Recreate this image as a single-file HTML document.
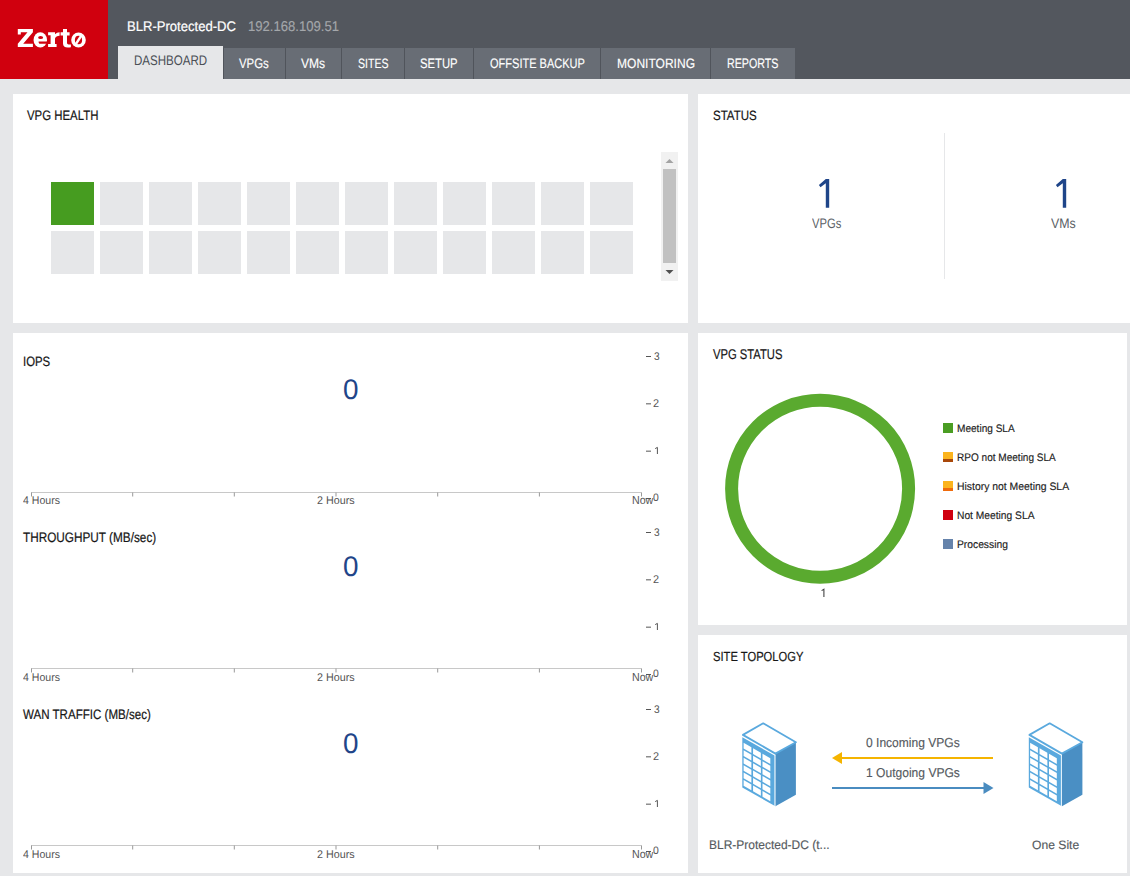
<!DOCTYPE html>
<html><head><meta charset="utf-8"><title>Zerto Dashboard</title>
<style>
html,body{margin:0;padding:0;}
body{width:1130px;height:876px;overflow:hidden;position:relative;background:#e6e7e9;font-family:"Liberation Sans",sans-serif;text-rendering:geometricPrecision;}
.t{position:absolute;white-space:nowrap;line-height:1;transform-origin:0 0;}
.s3{-webkit-text-stroke:0.2px currentColor;}
.s2{-webkit-text-stroke:0.15px currentColor;}
.hdr{position:absolute;left:0;top:0;width:1130px;height:79px;background:#53575e;}
.logo{position:absolute;left:0;top:0;width:108px;height:79px;background:#d0000e;}
.tab{position:absolute;top:48px;height:31px;background:#686d75;}
.tab.act{top:46px;height:33px;background:#e6e7e9;}
.sep{position:absolute;top:48px;height:31px;width:1px;background:#50545b;}
.pnl{position:absolute;background:#fff;}
.sq{position:absolute;width:43px;height:43px;}
.ov{position:absolute;left:0;top:0;}
</style></head><body>
<header>
<div class="hdr"></div>
<div class="logo"></div>
<span class="t s3" style="left:126.87px;top:20.20px;font-size:13.86px;font-family:'Liberation Sans', sans-serif;font-weight:400;color:#fff;transform:scaleX(0.9423);">BLR-Protected-DC</span>
<span class="t s2" style="left:248.42px;top:20.20px;font-size:14.22px;font-family:'Liberation Sans', sans-serif;font-weight:400;color:#a4a7ab;transform:scaleX(0.9213);">192.168.109.51</span>
<nav>
<div class="tab act" style="left:118px;width:105px"></div>
<span class="t " style="left:133.65px;top:54.36px;font-size:13.82px;font-family:'Liberation Sans', sans-serif;font-weight:400;color:#4b4f56;transform:scaleX(0.8359);">DASHBOARD</span>
<div class="tab" style="left:224px;width:61px"></div>
<div class="sep" style="left:223px"></div>
<span class="t s2" style="left:238.68px;top:56.82px;font-size:13.75px;font-family:'Liberation Sans', sans-serif;font-weight:400;color:#fff;transform:scaleX(0.8283);">VPGs</span>
<div class="tab" style="left:286px;width:55px"></div>
<div class="sep" style="left:285px"></div>
<span class="t s2" style="left:300.89px;top:56.82px;font-size:13.75px;font-family:'Liberation Sans', sans-serif;font-weight:400;color:#fff;transform:scaleX(0.8774);">VMs</span>
<div class="tab" style="left:342px;width:62px"></div>
<div class="sep" style="left:341px"></div>
<span class="t s2" style="left:357.65px;top:56.86px;font-size:13.51px;font-family:'Liberation Sans', sans-serif;font-weight:400;color:#fff;transform:scaleX(0.7813);">SITES</span>
<div class="tab" style="left:405px;width:68px"></div>
<div class="sep" style="left:404px"></div>
<span class="t s2" style="left:420.06px;top:56.89px;font-size:13.70px;font-family:'Liberation Sans', sans-serif;font-weight:400;color:#fff;transform:scaleX(0.8220);">SETUP</span>
<div class="tab" style="left:474px;width:126px"></div>
<div class="sep" style="left:473px"></div>
<span class="t s2" style="left:490.20px;top:56.82px;font-size:13.75px;font-family:'Liberation Sans', sans-serif;font-weight:400;color:#fff;transform:scaleX(0.8012);">OFFSITE BACKUP</span>
<div class="tab" style="left:601px;width:109px"></div>
<div class="sep" style="left:600px"></div>
<span class="t s2" style="left:616.62px;top:56.86px;font-size:13.51px;font-family:'Liberation Sans', sans-serif;font-weight:400;color:#fff;transform:scaleX(0.8913);">MONITORING</span>
<div class="tab" style="left:711px;width:84px"></div>
<div class="sep" style="left:710px"></div>
<span class="t s2" style="left:726.89px;top:56.89px;font-size:13.70px;font-family:'Liberation Sans', sans-serif;font-weight:400;color:#fff;transform:scaleX(0.7812);">REPORTS</span>
</nav></header>
<main>
<div class="pnl" style="left:13px;top:94px;width:675px;height:229px"></div>
<div class="pnl" style="left:698px;top:94px;width:440px;height:229px"></div>
<div class="pnl" style="left:13px;top:333px;width:675px;height:540px"></div>
<div class="pnl" style="left:698px;top:333px;width:429px;height:292px"></div>
<div class="pnl" style="left:698px;top:635px;width:429px;height:238px"></div>
<span class="t s3" style="left:27.21px;top:108.89px;font-size:13.70px;font-family:'Liberation Sans', sans-serif;font-weight:400;color:#161616;transform:scaleX(0.8330);">VPG HEALTH</span>
<span class="t s3" style="left:712.82px;top:109.07px;font-size:13.49px;font-family:'Liberation Sans', sans-serif;font-weight:400;color:#161616;transform:scaleX(0.8531);">STATUS</span>
<span class="t s3" style="left:713.38px;top:347.39px;font-size:14.09px;font-family:'Liberation Sans', sans-serif;font-weight:400;color:#161616;transform:scaleX(0.7970);">VPG STATUS</span>
<span class="t s3" style="left:712.70px;top:650.10px;font-size:13.26px;font-family:'Liberation Sans', sans-serif;font-weight:400;color:#161616;transform:scaleX(0.8449);">SITE TOPOLOGY</span>
<div class="sq" style="left:51px;top:182px;background:#469c20"></div>
<div class="sq" style="left:100px;top:182px;background:#e6e7e9"></div>
<div class="sq" style="left:149px;top:182px;background:#e6e7e9"></div>
<div class="sq" style="left:198px;top:182px;background:#e6e7e9"></div>
<div class="sq" style="left:247px;top:182px;background:#e6e7e9"></div>
<div class="sq" style="left:296px;top:182px;background:#e6e7e9"></div>
<div class="sq" style="left:345px;top:182px;background:#e6e7e9"></div>
<div class="sq" style="left:394px;top:182px;background:#e6e7e9"></div>
<div class="sq" style="left:443px;top:182px;background:#e6e7e9"></div>
<div class="sq" style="left:492px;top:182px;background:#e6e7e9"></div>
<div class="sq" style="left:541px;top:182px;background:#e6e7e9"></div>
<div class="sq" style="left:590px;top:182px;background:#e6e7e9"></div>
<div class="sq" style="left:51px;top:231px;background:#e6e7e9"></div>
<div class="sq" style="left:100px;top:231px;background:#e6e7e9"></div>
<div class="sq" style="left:149px;top:231px;background:#e6e7e9"></div>
<div class="sq" style="left:198px;top:231px;background:#e6e7e9"></div>
<div class="sq" style="left:247px;top:231px;background:#e6e7e9"></div>
<div class="sq" style="left:296px;top:231px;background:#e6e7e9"></div>
<div class="sq" style="left:345px;top:231px;background:#e6e7e9"></div>
<div class="sq" style="left:394px;top:231px;background:#e6e7e9"></div>
<div class="sq" style="left:443px;top:231px;background:#e6e7e9"></div>
<div class="sq" style="left:492px;top:231px;background:#e6e7e9"></div>
<div class="sq" style="left:541px;top:231px;background:#e6e7e9"></div>
<div class="sq" style="left:590px;top:231px;background:#e6e7e9"></div>
<div style="position:absolute;left:661px;top:152px;width:17px;height:129px;background:#f1f1f1"></div>
<div style="position:absolute;left:663px;top:169px;width:13px;height:94px;background:#c1c1c1"></div>
<div style="position:absolute;left:944px;top:133px;width:1px;height:146px;background:#e6e7e9"></div>
<span class="t " style="left:811.72px;top:217.11px;font-size:13.71px;font-family:'Liberation Sans', sans-serif;font-weight:400;color:#5b5f66;transform:scaleX(0.8174);">VPGs</span>
<span class="t " style="left:1050.55px;top:217.01px;font-size:13.80px;font-family:'Liberation Sans', sans-serif;font-weight:400;color:#5b5f66;transform:scaleX(0.8965);">VMs</span>
<span class="t s3" style="left:22.95px;top:354.92px;font-size:13.51px;font-family:'Liberation Sans', sans-serif;font-weight:400;color:#161616;transform:scaleX(0.8429);">IOPS</span>
<span class="t " style="left:342.90px;top:375.82px;font-size:28.47px;font-family:'Liberation Sans', sans-serif;font-weight:400;color:#1f4589;transform:scaleX(0.9784);">0</span>
<span class="t " style="left:22.76px;top:496.01px;font-size:11.14px;font-family:'Liberation Sans', sans-serif;font-weight:400;color:#555;transform:scaleX(0.9486);">4 Hours</span>
<span class="t " style="left:317.40px;top:496.01px;font-size:11.14px;font-family:'Liberation Sans', sans-serif;font-weight:400;color:#555;transform:scaleX(0.9653);">2 Hours</span>
<span class="t " style="left:631.93px;top:496.49px;font-size:11.51px;font-family:'Liberation Sans', sans-serif;font-weight:400;color:#555;transform:scaleX(0.9257);">Now</span>
<span class="t " style="left:653.85px;top:351.93px;font-size:11.10px;font-family:'Liberation Sans', sans-serif;font-weight:400;color:#555;transform:scaleX(0.9130);">3</span>
<span class="t " style="left:653.30px;top:399.32px;font-size:11.20px;font-family:'Liberation Sans', sans-serif;font-weight:400;color:#555;transform:scaleX(0.9723);">2</span>
<span class="t " style="left:653.21px;top:492.88px;font-size:10.89px;font-family:'Liberation Sans', sans-serif;font-weight:400;color:#555;transform:scaleX(0.9583);">0</span>
<span class="t s3" style="left:22.50px;top:530.89px;font-size:13.70px;font-family:'Liberation Sans', sans-serif;font-weight:400;color:#161616;transform:scaleX(0.8601);">THROUGHPUT (MB/sec)</span>
<span class="t " style="left:342.90px;top:552.82px;font-size:28.47px;font-family:'Liberation Sans', sans-serif;font-weight:400;color:#1f4589;transform:scaleX(0.9784);">0</span>
<span class="t " style="left:22.76px;top:673.01px;font-size:11.14px;font-family:'Liberation Sans', sans-serif;font-weight:400;color:#555;transform:scaleX(0.9486);">4 Hours</span>
<span class="t " style="left:317.40px;top:673.01px;font-size:11.14px;font-family:'Liberation Sans', sans-serif;font-weight:400;color:#555;transform:scaleX(0.9653);">2 Hours</span>
<span class="t " style="left:631.93px;top:673.49px;font-size:11.51px;font-family:'Liberation Sans', sans-serif;font-weight:400;color:#555;transform:scaleX(0.9257);">Now</span>
<span class="t " style="left:653.85px;top:527.93px;font-size:11.10px;font-family:'Liberation Sans', sans-serif;font-weight:400;color:#555;transform:scaleX(0.9130);">3</span>
<span class="t " style="left:653.30px;top:575.32px;font-size:11.20px;font-family:'Liberation Sans', sans-serif;font-weight:400;color:#555;transform:scaleX(0.9723);">2</span>
<span class="t " style="left:653.21px;top:668.88px;font-size:10.89px;font-family:'Liberation Sans', sans-serif;font-weight:400;color:#555;transform:scaleX(0.9583);">0</span>
<span class="t s3" style="left:22.98px;top:707.89px;font-size:13.70px;font-family:'Liberation Sans', sans-serif;font-weight:400;color:#161616;transform:scaleX(0.8447);">WAN TRAFFIC (MB/sec)</span>
<span class="t " style="left:342.90px;top:729.82px;font-size:28.47px;font-family:'Liberation Sans', sans-serif;font-weight:400;color:#1f4589;transform:scaleX(0.9784);">0</span>
<span class="t " style="left:22.76px;top:850.01px;font-size:11.14px;font-family:'Liberation Sans', sans-serif;font-weight:400;color:#555;transform:scaleX(0.9486);">4 Hours</span>
<span class="t " style="left:317.40px;top:850.01px;font-size:11.14px;font-family:'Liberation Sans', sans-serif;font-weight:400;color:#555;transform:scaleX(0.9653);">2 Hours</span>
<span class="t " style="left:631.93px;top:850.49px;font-size:11.51px;font-family:'Liberation Sans', sans-serif;font-weight:400;color:#555;transform:scaleX(0.9257);">Now</span>
<span class="t " style="left:653.85px;top:704.93px;font-size:11.10px;font-family:'Liberation Sans', sans-serif;font-weight:400;color:#555;transform:scaleX(0.9130);">3</span>
<span class="t " style="left:653.30px;top:752.32px;font-size:11.20px;font-family:'Liberation Sans', sans-serif;font-weight:400;color:#555;transform:scaleX(0.9723);">2</span>
<span class="t " style="left:653.21px;top:845.88px;font-size:10.89px;font-family:'Liberation Sans', sans-serif;font-weight:400;color:#555;transform:scaleX(0.9583);">0</span>
<div style="position:absolute;left:943px;top:423px;width:10px;height:10px;background:#4a9d23"></div>
<span class="t s2" style="left:957.11px;top:423.61px;font-size:10.95px;font-family:'Liberation Sans', sans-serif;font-weight:400;color:#222;transform:scaleX(0.9210);">Meeting SLA</span>
<div style="position:absolute;left:943px;top:452px;width:10px;height:7px;background:#fbb41e"></div>
<div style="position:absolute;left:943px;top:459px;width:10px;height:3px;background:#a9480a"></div>
<span class="t s2" style="left:957.01px;top:452.61px;font-size:10.95px;font-family:'Liberation Sans', sans-serif;font-weight:400;color:#222;transform:scaleX(0.9182);">RPO not Meeting SLA</span>
<div style="position:absolute;left:943px;top:481px;width:10px;height:7px;background:#fbb41e"></div>
<div style="position:absolute;left:943px;top:488px;width:10px;height:3px;background:#ef6b0c"></div>
<span class="t s2" style="left:956.99px;top:481.61px;font-size:10.95px;font-family:'Liberation Sans', sans-serif;font-weight:400;color:#222;transform:scaleX(0.9504);">History not Meeting SLA</span>
<div style="position:absolute;left:943px;top:510px;width:10px;height:10px;background:#d0000f"></div>
<span class="t s2" style="left:957.02px;top:510.61px;font-size:10.95px;font-family:'Liberation Sans', sans-serif;font-weight:400;color:#222;transform:scaleX(0.9373);">Not Meeting SLA</span>
<div style="position:absolute;left:943px;top:539px;width:10px;height:10px;background:#6583ab"></div>
<span class="t s2" style="left:957.10px;top:539.61px;font-size:10.95px;font-family:'Liberation Sans', sans-serif;font-weight:400;color:#222;transform:scaleX(0.9404);">Processing</span>
<span class="t s2" style="left:865.95px;top:736.20px;font-size:13.09px;font-family:'Liberation Sans', sans-serif;font-weight:400;color:#555a60;transform:scaleX(0.9210);">0 Incoming VPGs</span>
<span class="t s2" style="left:865.51px;top:767.44px;font-size:12.90px;font-family:'Liberation Sans', sans-serif;font-weight:400;color:#555a60;transform:scaleX(0.9359);">1 Outgoing VPGs</span>
<span class="t s2" style="left:709.28px;top:838.71px;font-size:12.55px;font-family:'Liberation Sans', sans-serif;font-weight:400;color:#555a60;transform:scaleX(0.9552);">BLR-Protected-DC (t...</span>
<span class="t s2" style="left:1032.01px;top:839.10px;font-size:12.25px;font-family:'Liberation Sans', sans-serif;font-weight:400;color:#555a60;transform:scaleX(0.9905);">One Site</span>
</main>
<svg class="ov" width="1130" height="876" viewBox="0 0 1130 876"><path d="M17.8,29 H32.9 V32.3 L23.2,43.8 H32.9 V47 H17.8 V43.7 L27.5,32.3 H20.8 V34.6 H17.8 Z" fill="#fff"/><ellipse cx="40.3" cy="39.9" rx="6.75" ry="7.6" fill="#fff"/><ellipse cx="40.6" cy="37.5" rx="2.5" ry="1.55" fill="#d0000e"/><path d="M38.6,41.6 H47.3 V43.7 H39.4 Q38.4,42.8 38.6,41.6 Z" fill="#d0000e"/><path d="M48.1,32.3 H55 V34.3 Q56.8,32.3 59.6,32.3 V35.8 Q56,35.8 55,38.5 V44 H56.6 V47 H48.1 V44 H50.6 V35.2 H48.1 Z" fill="#fff"/><path d="M63,29 H67 V32.3 H69.6 V35.4 H67 V43 Q67,44.4 68.6,44.4 H70.9 V47.3 Q69.5,47.6 67.8,47.6 Q63,47.6 63,43.5 V35.4 H60.6 V32.3 H63 Z" fill="#fff"/><ellipse cx="78.5" cy="40" rx="7.3" ry="7.55" fill="#fff"/><ellipse cx="78.5" cy="40" rx="3.6" ry="4.3" fill="#d0000e"/><path d="M80.6,34.6 L82.9,35.6 L76.4,45.4 L74.1,44.4 Z" fill="#fff"/><polygon points="665.5,163 673.5,163 669.5,159" fill="#a3a3a3"/><polygon points="665.5,270 673.5,270 669.5,274" fill="#505050"/><polygon points="818.90,184.90 825.80,179.10 829.20,179.10 829.20,207.80 825.80,207.80 825.80,183.20 820.50,187.20" fill="#1f4589"/><polygon points="1055.90,184.90 1062.80,179.10 1066.20,179.10 1066.20,207.80 1062.80,207.80 1062.80,183.20 1057.50,187.20" fill="#1f4589"/><line x1="31" y1="492.5" x2="641.5" y2="492.5" stroke="#c8c8c8" stroke-width="1"/><line x1="31.5" y1="492.5" x2="31.5" y2="496.5" stroke="#999" stroke-width="1"/><line x1="132.7" y1="492.5" x2="132.7" y2="496.5" stroke="#999" stroke-width="1"/><line x1="234.3" y1="492.5" x2="234.3" y2="496.5" stroke="#999" stroke-width="1"/><line x1="336.0" y1="492.5" x2="336.0" y2="496.5" stroke="#999" stroke-width="1"/><line x1="437.7" y1="492.5" x2="437.7" y2="496.5" stroke="#999" stroke-width="1"/><line x1="539.4" y1="492.5" x2="539.4" y2="496.5" stroke="#999" stroke-width="1"/><line x1="641.5" y1="492.5" x2="641.5" y2="496.5" stroke="#999" stroke-width="1"/><line x1="646" y1="356.50" x2="651" y2="356.50" stroke="#555" stroke-width="1"/><line x1="646" y1="403.83" x2="651" y2="403.83" stroke="#555" stroke-width="1"/><line x1="646" y1="451.16" x2="651" y2="451.16" stroke="#555" stroke-width="1"/><line x1="646" y1="498.49" x2="651" y2="498.49" stroke="#555" stroke-width="1"/><path d="M655.2,448.60 L657.4,447.40 V454.00" fill="none" stroke="#555" stroke-width="1"/><line x1="31" y1="668.5" x2="641.5" y2="668.5" stroke="#c8c8c8" stroke-width="1"/><line x1="31.5" y1="668.5" x2="31.5" y2="672.5" stroke="#999" stroke-width="1"/><line x1="132.7" y1="668.5" x2="132.7" y2="672.5" stroke="#999" stroke-width="1"/><line x1="234.3" y1="668.5" x2="234.3" y2="672.5" stroke="#999" stroke-width="1"/><line x1="336.0" y1="668.5" x2="336.0" y2="672.5" stroke="#999" stroke-width="1"/><line x1="437.7" y1="668.5" x2="437.7" y2="672.5" stroke="#999" stroke-width="1"/><line x1="539.4" y1="668.5" x2="539.4" y2="672.5" stroke="#999" stroke-width="1"/><line x1="641.5" y1="668.5" x2="641.5" y2="672.5" stroke="#999" stroke-width="1"/><line x1="646" y1="532.50" x2="651" y2="532.50" stroke="#555" stroke-width="1"/><line x1="646" y1="579.83" x2="651" y2="579.83" stroke="#555" stroke-width="1"/><line x1="646" y1="627.16" x2="651" y2="627.16" stroke="#555" stroke-width="1"/><line x1="646" y1="674.49" x2="651" y2="674.49" stroke="#555" stroke-width="1"/><path d="M655.2,624.60 L657.4,623.40 V630.00" fill="none" stroke="#555" stroke-width="1"/><line x1="31" y1="845.5" x2="641.5" y2="845.5" stroke="#c8c8c8" stroke-width="1"/><line x1="31.5" y1="845.5" x2="31.5" y2="849.5" stroke="#999" stroke-width="1"/><line x1="132.7" y1="845.5" x2="132.7" y2="849.5" stroke="#999" stroke-width="1"/><line x1="234.3" y1="845.5" x2="234.3" y2="849.5" stroke="#999" stroke-width="1"/><line x1="336.0" y1="845.5" x2="336.0" y2="849.5" stroke="#999" stroke-width="1"/><line x1="437.7" y1="845.5" x2="437.7" y2="849.5" stroke="#999" stroke-width="1"/><line x1="539.4" y1="845.5" x2="539.4" y2="849.5" stroke="#999" stroke-width="1"/><line x1="641.5" y1="845.5" x2="641.5" y2="849.5" stroke="#999" stroke-width="1"/><line x1="646" y1="709.50" x2="651" y2="709.50" stroke="#555" stroke-width="1"/><line x1="646" y1="756.83" x2="651" y2="756.83" stroke="#555" stroke-width="1"/><line x1="646" y1="804.16" x2="651" y2="804.16" stroke="#555" stroke-width="1"/><line x1="646" y1="851.49" x2="651" y2="851.49" stroke="#555" stroke-width="1"/><path d="M655.2,801.60 L657.4,800.40 V807.00" fill="none" stroke="#555" stroke-width="1"/><circle cx="820.1" cy="488.75" r="88.5" fill="none" stroke="#5aaa2f" stroke-width="13"/><path d="M821.6,590.6 L823.9,589.2 V597" fill="none" stroke="#444" stroke-width="1.1"/><line x1="838" y1="758" x2="993" y2="758" stroke="#f5b400" stroke-width="2.2"/><polygon points="832,758 842,752 842,764" fill="#f5b400"/><line x1="832" y1="788" x2="986" y2="788" stroke="#4a8cc0" stroke-width="2.2"/><polygon points="993.5,788 983.5,782 983.5,794" fill="#4a8cc0"/><g transform="translate(740,722)"><polygon points="2.30,15.30 35.40,34.00 35.40,84.20 2.30,65.50" fill="#5aa9de"/><polygon points="35.40,31.60 55.90,20.20 55.90,72.80 35.40,84.20" fill="#4a8fc4"/><line x1="34.9" y1="33.1" x2="34.9" y2="84.2" stroke="#fff" stroke-width="0.9"/><polygon points="3.60,20.80 11.40,25.30 11.40,31.00 3.60,26.50" fill="#fff"/><polygon points="3.60,28.25 11.40,32.75 11.40,38.45 3.60,33.95" fill="#fff"/><polygon points="3.60,35.70 11.40,40.20 11.40,45.90 3.60,41.40" fill="#fff"/><polygon points="3.60,43.15 11.40,47.65 11.40,53.35 3.60,48.85" fill="#fff"/><polygon points="3.60,50.60 11.40,55.10 11.40,60.80 3.60,56.30" fill="#fff"/><polygon points="3.60,58.05 11.40,62.55 11.40,68.25 3.60,63.75" fill="#fff"/><polygon points="13.05,26.26 20.85,30.76 20.85,36.46 13.05,31.96" fill="#fff"/><polygon points="13.05,33.71 20.85,38.21 20.85,43.91 13.05,39.41" fill="#fff"/><polygon points="13.05,41.16 20.85,45.66 20.85,51.36 13.05,46.86" fill="#fff"/><polygon points="13.05,48.61 20.85,53.11 20.85,58.81 13.05,54.31" fill="#fff"/><polygon points="13.05,56.06 20.85,60.56 20.85,66.26 13.05,61.76" fill="#fff"/><polygon points="13.05,63.51 20.85,68.01 20.85,73.71 13.05,69.21" fill="#fff"/><polygon points="22.50,31.71 30.30,36.21 30.30,41.91 22.50,37.41" fill="#fff"/><polygon points="22.50,39.16 30.30,43.66 30.30,49.36 22.50,44.86" fill="#fff"/><polygon points="22.50,46.61 30.30,51.11 30.30,56.81 22.50,52.31" fill="#fff"/><polygon points="22.50,54.06 30.30,58.56 30.30,64.26 22.50,59.76" fill="#fff"/><polygon points="22.50,61.51 30.30,66.01 30.30,71.71 22.50,67.21" fill="#fff"/><polygon points="22.50,68.96 30.30,73.46 30.30,79.16 22.50,74.66" fill="#fff"/><polygon points="23.20,1.30 55.90,20.20 35.40,31.60 2.90,12.90" fill="#fff" stroke="#5aa9de" stroke-width="1.8" stroke-linejoin="round"/></g><g transform="translate(1026.5,722)"><polygon points="2.30,15.30 35.40,34.00 35.40,84.20 2.30,65.50" fill="#5aa9de"/><polygon points="35.40,31.60 55.90,20.20 55.90,72.80 35.40,84.20" fill="#4a8fc4"/><line x1="34.9" y1="33.1" x2="34.9" y2="84.2" stroke="#fff" stroke-width="0.9"/><polygon points="3.60,20.80 11.40,25.30 11.40,31.00 3.60,26.50" fill="#fff"/><polygon points="3.60,28.25 11.40,32.75 11.40,38.45 3.60,33.95" fill="#fff"/><polygon points="3.60,35.70 11.40,40.20 11.40,45.90 3.60,41.40" fill="#fff"/><polygon points="3.60,43.15 11.40,47.65 11.40,53.35 3.60,48.85" fill="#fff"/><polygon points="3.60,50.60 11.40,55.10 11.40,60.80 3.60,56.30" fill="#fff"/><polygon points="3.60,58.05 11.40,62.55 11.40,68.25 3.60,63.75" fill="#fff"/><polygon points="13.05,26.26 20.85,30.76 20.85,36.46 13.05,31.96" fill="#fff"/><polygon points="13.05,33.71 20.85,38.21 20.85,43.91 13.05,39.41" fill="#fff"/><polygon points="13.05,41.16 20.85,45.66 20.85,51.36 13.05,46.86" fill="#fff"/><polygon points="13.05,48.61 20.85,53.11 20.85,58.81 13.05,54.31" fill="#fff"/><polygon points="13.05,56.06 20.85,60.56 20.85,66.26 13.05,61.76" fill="#fff"/><polygon points="13.05,63.51 20.85,68.01 20.85,73.71 13.05,69.21" fill="#fff"/><polygon points="22.50,31.71 30.30,36.21 30.30,41.91 22.50,37.41" fill="#fff"/><polygon points="22.50,39.16 30.30,43.66 30.30,49.36 22.50,44.86" fill="#fff"/><polygon points="22.50,46.61 30.30,51.11 30.30,56.81 22.50,52.31" fill="#fff"/><polygon points="22.50,54.06 30.30,58.56 30.30,64.26 22.50,59.76" fill="#fff"/><polygon points="22.50,61.51 30.30,66.01 30.30,71.71 22.50,67.21" fill="#fff"/><polygon points="22.50,68.96 30.30,73.46 30.30,79.16 22.50,74.66" fill="#fff"/><polygon points="23.20,1.30 55.90,20.20 35.40,31.60 2.90,12.90" fill="#fff" stroke="#5aa9de" stroke-width="1.8" stroke-linejoin="round"/></g></svg>
</body></html>
